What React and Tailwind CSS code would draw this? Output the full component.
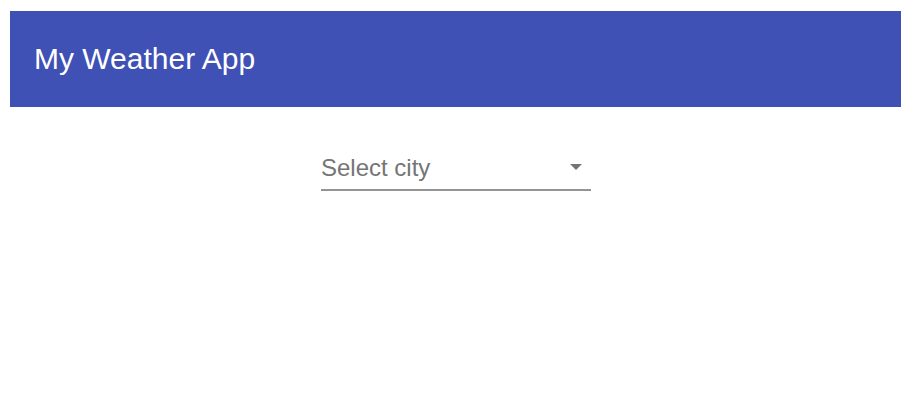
export default function App() {
  return (
    <div className="min-h-[417px] bg-white" style={{ fontFamily: '"Liberation Sans", Arial, sans-serif' }}>
      <div className="pl-[10px] pt-[11px] w-[901px]">
        <header className="h-[96px] bg-[#3f51b5] flex items-center px-[24px]">
          <h1 className="text-white text-[30px] font-normal leading-none">My Weather App</h1>
        </header>
      </div>
      <div className="flex justify-center pt-[46px] pr-[1px]">
        <div className="w-[270px] relative">
          <div className="flex items-center justify-between h-[36px] pb-[7px]">
            <span className="text-[#757575] text-[24px] leading-none">Select city</span>
            <svg width="12" height="6" viewBox="0 0 12 6" className="mr-[9px] mb-[1px]">
              <path d="M0 0 L12 0 L6 6 Z" fill="#757575" />
            </svg>
          </div>
          <div className="h-[2px] bg-[#949494]" />
        </div>
      </div>
    </div>
  );
}
